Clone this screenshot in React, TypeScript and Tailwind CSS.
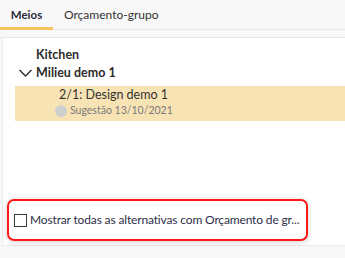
export default function App() {
  return (
    <div
      className="w-[345px] h-[258px] bg-[#f8f8f8] flex flex-col overflow-hidden text-[#2d2d2d]"
      style={{ fontFamily: 'Lato, "Noto Sans", sans-serif' }}
    >
      {/* Tabs */}
      <div className="flex h-[30px] border-b border-[#e6e6e6]">
        <div className="w-[53px] flex items-center justify-center text-[11.5px] font-bold text-[#2b2b3a] border-b-[3px] border-[#f4c25e] -mb-px pt-[2px]">
          Meios
        </div>
        <div className="pl-[11px] flex items-center pt-[1px] text-[12px] text-[#333]">Orçamento-grupo</div>
      </div>

      <div className="h-[8px] border-b border-[#e8e8e8]" />

      {/* Panel */}
      <div className="ml-[2px] h-[208px] bg-white border-l border-b border-[#ececec] flex flex-col">
        <div className="pt-[8px] text-[12.5px]">
          <div className="pl-[33px] h-[18px] leading-[18px] font-bold">Kitchen</div>
          <div className="flex items-center h-[18px] pl-[15px]">
            <svg width="15" height="14" viewBox="0 0 15 14" fill="none" stroke="#333" strokeWidth="1.5">
              <polyline points="1.5,4 7.5,10 13.5,4" />
            </svg>
            <span className="ml-[3px] font-bold">Milieu demo 1</span>
          </div>
          <div className="ml-[12px] mt-[4px] h-[35px] bg-[#f8e3b5] pl-[44px]">
            <div className="h-[18px] leading-[18px] text-[12.5px] text-[#333]">2/1: Design demo 1</div>
            <div className="flex items-center gap-[3px] -ml-[4px] h-[13px]">
              <span className="shrink-0 w-[12px] h-[12px] rounded-full bg-[#cfcfcf]" />
              <span className="text-[10.5px] text-[#7a7a7a]">Sugestão 13/10/2021</span>
            </div>
          </div>
        </div>

        <div className="flex-1" />

        <div className="ml-[4px] mb-[4px] w-[301px] h-[42px] border-2 border-[#ff1a1a] rounded-[7px] shadow-[0_1px_6px_rgba(0,0,0,0.18)] flex items-center pl-[5px]">
          <span className="shrink-0 block w-[13px] h-[13px] border border-[#3a3a3a] bg-white" />
          <span className="ml-[3px] text-[12px] tracking-[-0.15px] text-[#2e2e48] whitespace-nowrap">
            Mostrar todas as alternativas com Orçamento de gr...
          </span>
        </div>
      </div>
    </div>
  );
}
